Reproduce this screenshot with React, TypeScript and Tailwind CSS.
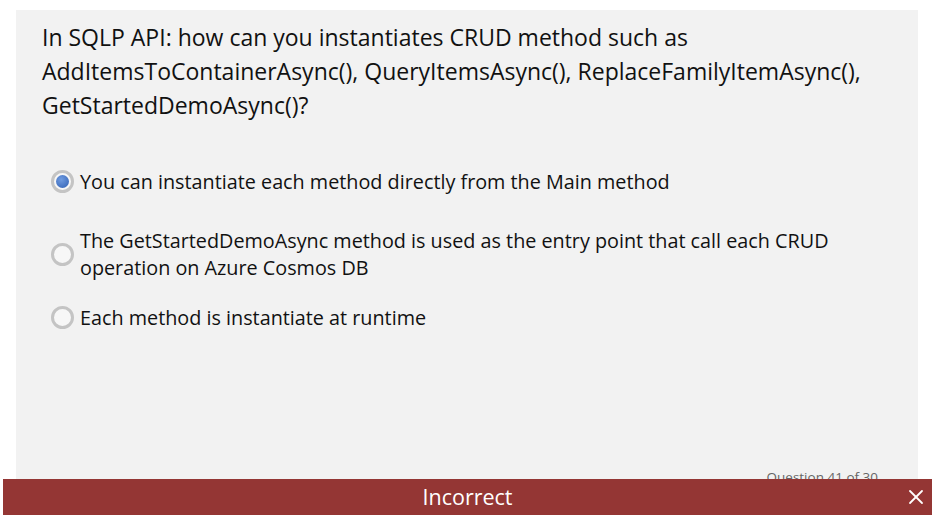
import { X } from 'lucide-react'

const options = [
  { id: 1, text: 'You can instantiate each method directly from the Main method', checked: true, gap: 'mt-0' },
  {
    id: 2,
    text: 'The GetStartedDemoAsync method is used as the entry point that call each CRUD operation on Azure Cosmos DB',
    checked: false,
    gap: 'mt-[32px]',
  },
  { id: 3, text: 'Each method is instantiate at runtime', checked: false, gap: 'mt-[23px]' },
]

function Radio({ checked }: { checked: boolean }) {
  return (
    <span className="flex size-[23px] shrink-0 items-center justify-center rounded-full border-[3px] border-[#c4c4c4] bg-[#f7f7f7]">
      {checked && (
        <span className="size-[13px] rounded-full bg-[radial-gradient(circle_at_40%_35%,#6f9be0,#2f5fb3)]"></span>
      )}
    </span>
  )
}

export default function App(): JSX.Element {
  return (
    <div className="relative h-[518px] w-[938px] overflow-hidden bg-white font-['Open_Sans',sans-serif] text-[#111]">
      <div className="ml-4 mt-[10px] h-[500px] w-[902px] bg-[#f2f2f2] pl-[26px] pr-6 pt-[10px]">
        <h1 className="text-[23px] leading-[34px]">
          In SQLP API: how can you instantiates CRUD method such as
          AddItemsToContainerAsync(), QueryItemsAsync(), ReplaceFamilyItemAsync(),
          GetStartedDemoAsync()?
        </h1>

        <div className="mt-[46px] flex flex-col pl-[9px]">
          {options.map((o) => (
            <label key={o.id} className={`flex items-center gap-[6px] ${o.gap}`}>
              <Radio checked={o.checked} />
              <span className="max-w-[780px] text-[19.8px] leading-[27px]">{o.text}</span>
            </label>
          ))}
        </div>

        <p className="mt-[136px] pr-[16px] text-right text-[13.5px] text-[#666]">Question 41 of 30</p>
      </div>

      <div className="absolute bottom-[3px] left-[3px] right-[6px] flex h-[36px] items-center justify-center bg-[#943634] text-white">
        <span className="text-[21.5px]">Incorrect</span>
        <X className="absolute right-[4px] size-[24px]" strokeWidth={1.8} />
      </div>
    </div>
  )
}
